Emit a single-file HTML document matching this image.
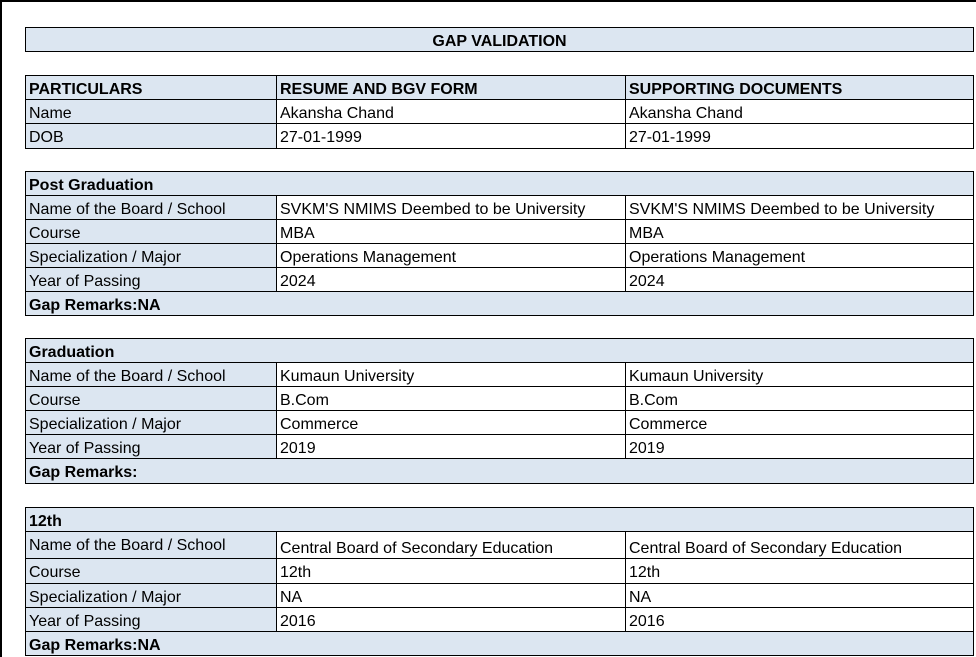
<!DOCTYPE html>
<html><head><meta charset="utf-8"><style>
body{margin:0;width:976px;height:657px;background:#fff;position:relative;overflow:hidden;font-family:"Liberation Sans",Calibri,sans-serif;font-size:16px;color:#000}
.frame{position:absolute;left:0;top:0;width:976px;height:657px;border-top:2px solid #000;border-left:2px solid #000;box-sizing:border-box}
.c{position:absolute;box-sizing:border-box;border:1px solid #000;padding-left:3px;white-space:nowrap;overflow:hidden;line-height:27px}
.f{background:#dce6f1}
.b{font-weight:bold}
</style></head><body>
<div class="frame"></div>
<div class="c f b" style="left:25px;top:27px;width:949px;height:25px;text-align:center;padding-left:0">GAP VALIDATION</div>

<div class="c f b" style="left:25px;top:75px;width:252px;height:25px">PARTICULARS</div>
<div class="c f b" style="left:276px;top:75px;width:350px;height:25px">RESUME AND BGV FORM</div>
<div class="c f b" style="left:625px;top:75px;width:349px;height:25px">SUPPORTING DOCUMENTS</div>
<div class="c f" style="left:25px;top:99px;width:252px;height:25px">Name</div>
<div class="c" style="left:276px;top:99px;width:350px;height:25px">Akansha Chand</div>
<div class="c" style="left:625px;top:99px;width:349px;height:25px">Akansha Chand</div>
<div class="c f" style="left:25px;top:123px;width:252px;height:26px">DOB</div>
<div class="c" style="left:276px;top:123px;width:350px;height:26px">27-01-1999</div>
<div class="c" style="left:625px;top:123px;width:349px;height:26px">27-01-1999</div>

<div class="c f b" style="left:25px;top:171px;width:949px;height:25px">Post Graduation</div>
<div class="c f" style="left:25px;top:195px;width:252px;height:25px">Name of the Board / School</div>
<div class="c" style="left:276px;top:195px;width:350px;height:25px">SVKM'S NMIMS Deembed to be University</div>
<div class="c" style="left:625px;top:195px;width:349px;height:25px">SVKM'S NMIMS Deembed to be University</div>
<div class="c f" style="left:25px;top:219px;width:252px;height:25px">Course</div>
<div class="c" style="left:276px;top:219px;width:350px;height:25px">MBA</div>
<div class="c" style="left:625px;top:219px;width:349px;height:25px">MBA</div>
<div class="c f" style="left:25px;top:243px;width:252px;height:25px">Specialization / Major</div>
<div class="c" style="left:276px;top:243px;width:350px;height:25px">Operations Management</div>
<div class="c" style="left:625px;top:243px;width:349px;height:25px">Operations Management</div>
<div class="c f" style="left:25px;top:267px;width:252px;height:25px">Year of Passing</div>
<div class="c" style="left:276px;top:267px;width:350px;height:25px">2024</div>
<div class="c" style="left:625px;top:267px;width:349px;height:25px">2024</div>
<div class="c f b" style="left:25px;top:291px;width:949px;height:25px">Gap Remarks:NA</div>

<div class="c f b" style="left:25px;top:338px;width:949px;height:25px">Graduation</div>
<div class="c f" style="left:25px;top:362px;width:252px;height:25px">Name of the Board / School</div>
<div class="c" style="left:276px;top:362px;width:350px;height:25px">Kumaun University</div>
<div class="c" style="left:625px;top:362px;width:349px;height:25px">Kumaun University</div>
<div class="c f" style="left:25px;top:386px;width:252px;height:25px">Course</div>
<div class="c" style="left:276px;top:386px;width:350px;height:25px">B.Com</div>
<div class="c" style="left:625px;top:386px;width:349px;height:25px">B.Com</div>
<div class="c f" style="left:25px;top:410px;width:252px;height:25px">Specialization / Major</div>
<div class="c" style="left:276px;top:410px;width:350px;height:25px">Commerce</div>
<div class="c" style="left:625px;top:410px;width:349px;height:25px">Commerce</div>
<div class="c f" style="left:25px;top:434px;width:252px;height:25px">Year of Passing</div>
<div class="c" style="left:276px;top:434px;width:350px;height:25px">2019</div>
<div class="c" style="left:625px;top:434px;width:349px;height:25px">2019</div>
<div class="c f b" style="left:25px;top:458px;width:949px;height:26px">Gap Remarks:</div>

<div class="c f b" style="left:25px;top:507px;width:949px;height:25px">12th</div>
<div class="c f" style="left:25px;top:531px;width:252px;height:28px;line-height:28px">Name of the Board / School</div>
<div class="c" style="left:276px;top:531px;width:350px;height:28px;line-height:33px">Central Board of Secondary Education</div>
<div class="c" style="left:625px;top:531px;width:349px;height:28px;line-height:33px">Central Board of Secondary Education</div>
<div class="c f" style="left:25px;top:558px;width:252px;height:26px">Course</div>
<div class="c" style="left:276px;top:558px;width:350px;height:26px">12th</div>
<div class="c" style="left:625px;top:558px;width:349px;height:26px">12th</div>
<div class="c f" style="left:25px;top:583px;width:252px;height:25px">Specialization / Major</div>
<div class="c" style="left:276px;top:583px;width:350px;height:25px">NA</div>
<div class="c" style="left:625px;top:583px;width:349px;height:25px">NA</div>
<div class="c f" style="left:25px;top:607px;width:252px;height:25px">Year of Passing</div>
<div class="c" style="left:276px;top:607px;width:350px;height:25px">2016</div>
<div class="c" style="left:625px;top:607px;width:349px;height:25px">2016</div>
<div class="c f b" style="left:25px;top:631px;width:949px;height:25px">Gap Remarks:NA</div>
</body></html>
